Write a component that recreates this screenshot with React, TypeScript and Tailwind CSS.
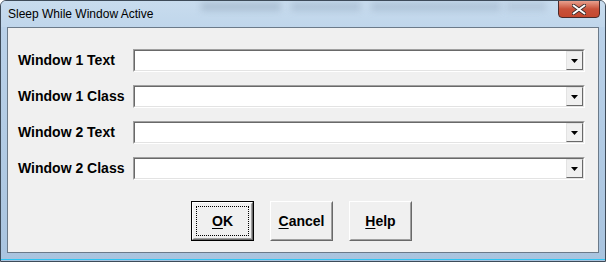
import React from 'react';

const rows = ['Window 1 Text', 'Window 1 Class', 'Window 2 Text', 'Window 2 Class'];

function Combo() {
  return (
    <div className="w-[452px] h-[23px] border border-t-[#a0a0a0] border-l-[#a0a0a0] border-b-white border-r-white">
      <div className="h-full flex border border-t-[#696969] border-l-[#696969] border-b-[#e3e3e3] border-r-[#e3e3e3] bg-white">
        <div className="flex-1" />
        <div className="w-[17px] h-full border border-t-[#e3e3e3] border-l-[#e3e3e3] border-b-[#696969] border-r-[#696969] bg-[#f0f0f0] flex items-center justify-center">
          <svg width="7" height="4" viewBox="0 0 7 4">
            <path d="M0 0h7L3.5 4z" fill="#000" />
          </svg>
        </div>
      </div>
    </div>
  );
}

function Btn({ first, rest, def }: { first: string; rest: string; def?: boolean }) {
  return (
    <div className={`w-[63px] h-[40px] ${def ? 'border border-black' : ''}`}>
      <div className="h-full border border-t-white border-l-white border-b-[#696969] border-r-[#696969] bg-[#f0f0f0]">
        <div className="h-full border border-t-[#f0f0f0] border-l-[#f0f0f0] border-b-[#a0a0a0] border-r-[#a0a0a0] flex items-center justify-center p-[2px]">
          <div className={`w-full h-full flex items-center justify-center ${def ? 'border border-dotted border-black' : ''}`}>
            <span className="text-[14px] font-bold text-black">
              <span className="underline underline-offset-2">{first}</span>
              {rest}
            </span>
          </div>
        </div>
      </div>
    </div>
  );
}

export default function App() {
  return (
    <div
      className="w-[606px] h-[262px] relative overflow-hidden bg-gradient-to-b from-[#bcd3ea] to-[#a9c4df] border border-[#3e4b59] rounded-t-[6px] flex flex-col"
      style={{ fontFamily: '"Liberation Sans", Arial, sans-serif' }}
    >
      <div className="h-[26px] relative flex items-center pl-[7px] bg-gradient-to-b from-[#c8dcee] to-[#c0d6eb]">
        <div className="absolute left-[200px] top-[1px] w-[80px] h-[9px] bg-[#7e93aa]/35 blur-[3px]" />
        <div className="absolute left-[290px] top-[1px] w-[70px] h-[9px] bg-[#7e93aa]/30 blur-[3px]" />
        <div className="absolute left-[370px] top-[1px] w-[130px] h-[9px] bg-[#7e93aa]/30 blur-[3px]" />
        <div className="absolute left-[505px] top-[1px] w-[40px] h-[9px] bg-[#7e93aa]/25 blur-[3px]" />
        <span className="relative text-[12px] text-black">Sleep While Window Active</span>
        <div className="absolute top-[-1px] right-[5px] w-[42px] h-[18px] rounded-b-[4px] border border-[#4a2a2a] bg-gradient-to-b from-[#e8a08e] via-[#c8513a] to-[#c4482f] flex items-center justify-center">
          <svg width="14" height="11" viewBox="0 0 14 11">
            <path d="M1.5 1.5L12.5 9.5M12.5 1.5L1.5 9.5" stroke="#3a2b2b" strokeWidth="3.5" strokeLinecap="round" />
            <path d="M1.5 1.5L12.5 9.5M12.5 1.5L1.5 9.5" stroke="#fff" strokeWidth="2" strokeLinecap="round" />
          </svg>
        </div>
      </div>
      <div className="mx-[6px] h-[226px] border border-[#6b7a89] bg-[#f0f0f0] pt-[21px] pl-[10px] flex flex-col">
        <div className="flex flex-col gap-[13px]">
          {rows.map((r) => (
            <div key={r} className="flex items-center h-[23px]">
              <div className="w-[115px] text-[14px] font-bold text-black">{r}</div>
              <Combo />
            </div>
          ))}
        </div>
        <div className="mt-[21px] ml-[173px] flex gap-[16px]">
          <Btn first="O" rest="K" def />
          <Btn first="C" rest="ancel" />
          <Btn first="H" rest="elp" />
        </div>
      </div>
      <div className="flex-1 relative">
        <div className="absolute bottom-[1px] left-0 right-0 h-[1px] bg-[#2ec4f2]" />
      </div>
    </div>
  );
}
